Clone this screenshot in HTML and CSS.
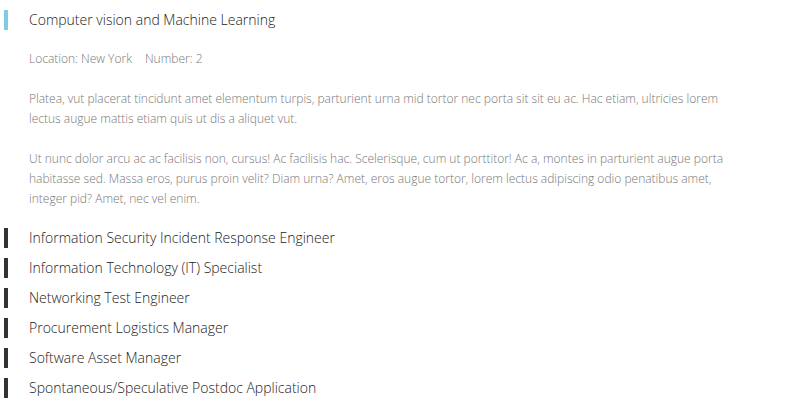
FILE: index.html
```html
<!DOCTYPE html>
<html lang="en">
<head>
<meta charset="utf-8">
<title>Jobs</title>
<link rel="stylesheet" href="styles.css">
</head>
<body>
<ul class="jobs">
  <li class="job job--open">
    <div class="job__title">Computer vision and Machine Learning</div>
    <div class="job__details">
      <div class="job__meta"><span class="job__meta-item">Location: New York</span><span class="job__meta-item">Number: 2</span></div>
      <p class="job__text">Platea, vut placerat tincidunt amet elementum turpis, parturient urna mid tortor nec porta sit sit eu ac. Hac etiam, ultricies lorem lectus augue mattis etiam quis ut dis a aliquet vut.</p>
      <p class="job__text">Ut nunc dolor arcu ac ac facilisis non, cursus! Ac facilisis hac. Scelerisque, cum ut porttitor! Ac a, montes in parturient augue porta habitasse sed. Massa eros, purus proin velit? Diam urna? Amet, eros augue tortor, lorem lectus adipiscing odio penatibus amet, integer pid? Amet, nec vel enim.</p>
    </div>
  </li>
  <li class="job"><div class="job__title">Information Security Incident Response Engineer</div></li>
  <li class="job"><div class="job__title">Information Technology (IT) Specialist</div></li>
  <li class="job"><div class="job__title">Networking Test Engineer</div></li>
  <li class="job"><div class="job__title">Procurement Logistics Manager</div></li>
  <li class="job"><div class="job__title">Software Asset Manager</div></li>
  <li class="job"><div class="job__title">Spontaneous/Speculative Postdoc Application</div></li>
</ul>
</body>
</html>
```
FILE: styles.css
```css
html, body {
  margin: 0;
  padding: 0;
  background: #fff;
}
body {
  font-family: "Open Sans", "Liberation Sans", sans-serif;
  font-weight: 300;
  color: #222;
  padding: 10px 0 0 4px;
}
.jobs {
  list-style: none;
  margin: 0;
  padding: 0;
  display: flex;
  flex-direction: column;
  gap: 10px;
}
.job__title {
  border-left: 4px solid #333;
  padding-left: 21px;
  font-size: 14px;
  line-height: 20px;
  color: #222;
}
.job--open .job__title {
  border-left-color: #7ecde2;
}
.job__details {
  padding: 19px 0 9px 25px;
  max-width: 721px;
  font-size: 12px;
  line-height: 20px;
  color: #777;
}
.job__meta {
  display: flex;
  gap: 13px;
  margin-bottom: 20px;
}
.job__text {
  margin: 0 0 20px;
}
.job__text:last-child {
  margin-bottom: 0;
}
```
